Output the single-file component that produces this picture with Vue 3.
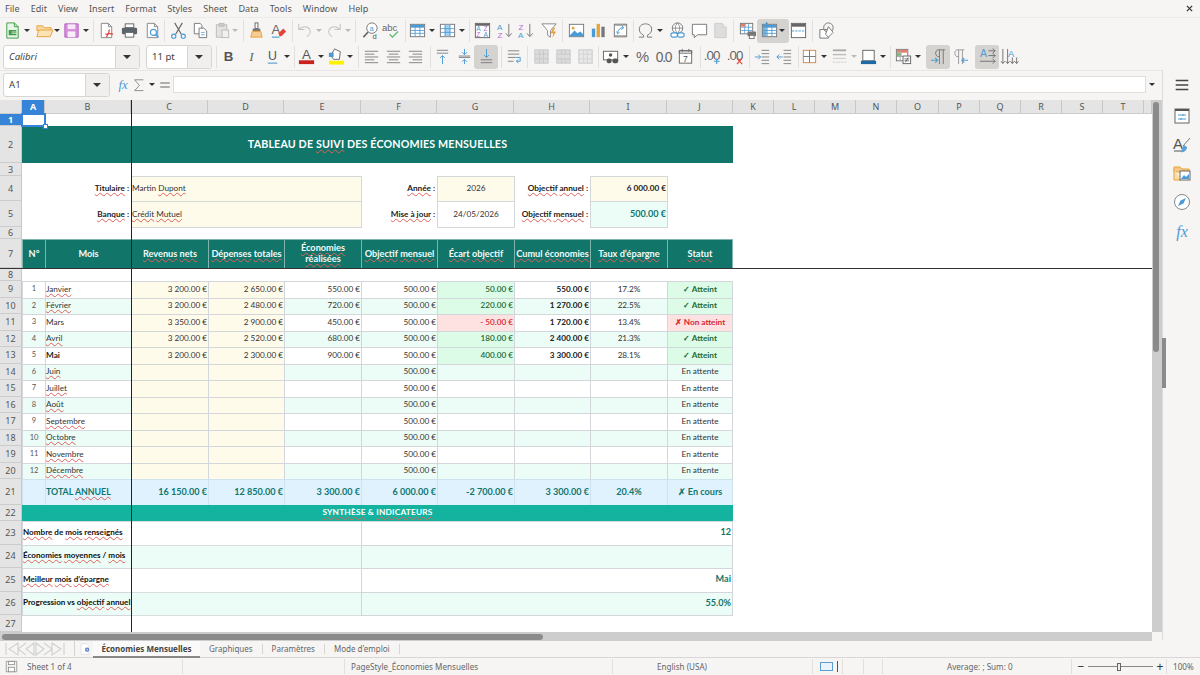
<script setup>
const menus = ['File','Edit','View','Insert','Format','Styles','Sheet','Data','Tools','Window','Help']

const B='#4a9bd6', G='#666', O='#e9a23b', L='#c4c4c4'
const page = (c='#777',f='#fff') => `<path d="M4.500 2.500h7.500l3.500 3.500v11.500h-11z" fill="${f}" stroke="${c}"/><path d="M12 2.500v3.500h3.500" fill="none" stroke="${c}"/>`
const lines = (ys,x1,x2,c=G) => ys.map(y=>`<path d="M${x1} ${y}H${x2}" stroke="${c}" stroke-width=".8"/>`).join('')
const lineAlt = (ys,x1,x2,x3,x4) => ys.map((y,i)=>`<path d="M${i%2?x3:x1} ${y}H${i%2?x4:x2}" stroke="${G}" stroke-width=".8"/>`).join('')
const gridI = (c=B,head=true) => `<rect x="2.500" y="3.500" width="15" height="13" fill="#fff" stroke="#777"/>${head?`<rect x="3" y="4" width="14" height="3" fill="${c}"/>`:''}<path d="M7.500 4v12M12.500 4v12M3 10h14M3 13h14" stroke="${c}" stroke-width=".9"/>`
const icons = {
  new:`<path d="M4 2h8l4 4v12H4z" fill="#e8f6e8" stroke="#3f9b48"/><path d="M12 2v4h4" fill="none" stroke="#3f9b48"/><rect x="6" y="9.500" width="8" height="5.500" fill="#3f9b48"/><path d="M9 11.500h5M9 13h5" stroke="#fff" stroke-width=".7"/>`,
  open:`<path d="M2 5h6l2 2h7v3H2z" fill="#f7d7a1" stroke="${O}"/><path d="M2 16.500l2-7h15l-3 7z" fill="#fbe3b8" stroke="${O}"/>`,
  save:`<path d="M3 3h14v14H3z" fill="#d88fdc" stroke="#b45cc0"/><rect x="6" y="3.500" width="8" height="5" fill="#f8e8f9"/><rect x="6" y="11" width="8" height="6" fill="#f8eff9"/>`,
  pdf:page('#888')+`<path d="M10 17c2-3 3-6 3-8M9 14c3-1 6-1 8 0" fill="none" stroke="#d9453c" stroke-width="1.300"/>`,
  print:`<rect x="5.500" y="3" width="9" height="4" fill="#fff" stroke="#666"/><rect x="2" y="7" width="16" height="7" rx="1.500" fill="#5b646b"/><rect x="5.500" y="12" width="9" height="5" fill="#fff" stroke="#666"/>`,
  preview:page('#888')+`<circle cx="11" cy="12" r="3.200" fill="#fff" stroke="${B}" stroke-width="1.200"/><path d="M13.300 14.300l3 3" stroke="${B}" stroke-width="1.500"/>`,
  cut:`<path d="M6 2l7 12M14 2L7 14" stroke="#666" stroke-width="1.200"/><circle cx="5" cy="16" r="2.200" fill="none" stroke="${B}" stroke-width="1.200"/><circle cx="15" cy="16" r="2.200" fill="none" stroke="${B}" stroke-width="1.200"/>`,
  copy:`<path d="M3.500 2.500h6l2 2v9h-8z" fill="#fff" stroke="#777"/><path d="M8.500 7.500h5l3 3v7h-8z" fill="#fff" stroke="#777"/><path d="M10.500 12h4M10.500 14.500h4" stroke="${B}" stroke-width=".8"/>`,
  paste:`<rect x="3.500" y="4" width="11" height="13" fill="#e2e2e2" stroke="#bbb"/><rect x="6.500" y="2.500" width="5" height="3" fill="#ccc" stroke="#bbb"/><rect x="9.500" y="9.500" width="7" height="8" fill="#f0f0f0" stroke="#bbb"/>`,
  clone:`<rect x="8.500" y="2" width="3" height="6" fill="#fff" stroke="#666"/><path d="M6 8h8v3H6z" fill="#777"/><path d="M5.500 11h9l1.500 6H4z" fill="#f7cc92" stroke="${O}"/>`,
  clear:`<text x="2.500" y="14" font-size="14" font-family="Liberation Sans" fill="#666">A</text><path d="M3 17h8" stroke="${B}" stroke-width="1.200"/><path d="M10 13l5-5 3 3-5 5h-2z" fill="#e4433b"/>`,
  undo:`<path d="M4 3v6h6M4.500 9c3-4 9-4 11 0 1.500 3-.5 6-3 7.500" fill="none" stroke="${L}" stroke-width="1.100"/>`,
  redo:`<path d="M16 3v6h-6M15.500 9c-3-4-9-4-11 0-1.500 3 .5 6 3 7.500" fill="none" stroke="${L}" stroke-width="1.100"/>`,
  find:`<circle cx="11.500" cy="7.500" r="5.500" fill="#fff" stroke="#777"/><path d="M7.500 11.500L2.500 17" stroke="#666" stroke-width="1.700"/><text x="9" y="10" font-size="8" font-family="Liberation Sans" fill="${B}">a</text><text x="12" y="18.500" font-size="8" font-family="Liberation Sans" fill="#555">d</text>`,
  spell:`<text x="0" y="10" font-size="10" font-family="Liberation Sans" fill="#666">abc</text><path d="M8 14l3 3 6-6" fill="none" stroke="#5dbb74" stroke-width="1.400"/>`,
  table:gridI(),
  col:`<rect x="2.500" y="3.500" width="15" height="13" fill="#fff" stroke="#777"/><rect x="7" y="4" width="6" height="12" fill="#a5d0f0"/><path d="M7.500 4v12M12.500 4v12M3 8h14M3 12h14" stroke="${B}" stroke-width=".9"/>`,
  sort:`<rect x="2.500" y="2.500" width="15" height="15" fill="#fff" stroke="#666"/><rect x="3" y="3" width="14" height="2" fill="#666"/><text x="3.500" y="11" font-size="7" font-family="Liberation Sans" fill="${B}">A</text><text x="11" y="11" font-size="7" font-family="Liberation Sans" fill="#b56ad3">Z</text><text x="3.500" y="17" font-size="7" font-family="Liberation Sans" fill="#b56ad3">Z</text><text x="11" y="17" font-size="7" font-family="Liberation Sans" fill="${B}">A</text>`,
  asc:`<text x="1" y="9" font-size="8.500" font-family="Liberation Sans" fill="${B}">A</text><text x="1.500" y="17.500" font-size="8.500" font-family="Liberation Sans" fill="#b56ad3">Z</text><path d="M13.500 3v13M10.500 13l3 3.500 3-3.500" fill="none" stroke="#777"/>`,
  desc:`<text x="1.500" y="9" font-size="8.500" font-family="Liberation Sans" fill="#b56ad3">Z</text><text x="1" y="17.500" font-size="8.500" font-family="Liberation Sans" fill="${B}">A</text><path d="M13.500 3v13M10.500 13l3 3.500 3-3.500" fill="none" stroke="#777"/>`,
  filter:`<path d="M2 3h15l-6 7v7l-3-2v-5z" fill="#fff" stroke="#888"/><path d="M14 7l-3 6h3l-1 5 4-7h-3l2-4z" fill="${O}"/>`,
  image:`<rect x="2.500" y="3.500" width="15" height="13" fill="#fff" stroke="#777"/><circle cx="6.500" cy="7.500" r="1.500" fill="${O}"/><path d="M3 15l5-5 3 3 3-2 3 3v2H3z" fill="${B}"/>`,
  chart:`<rect x="3" y="8" width="3.500" height="9" fill="${B}"/><rect x="8" y="3" width="3.500" height="14" fill="${O}"/><rect x="13" y="6" width="3.500" height="11" fill="#777"/>`,
  pivot:`<rect x="3.500" y="3.500" width="13" height="13" fill="#fff" stroke="#777"/><path d="M4 4h12M4 16h12" stroke="#999" stroke-width="2"/><path d="M7 13c0-3 2-6 6-6M11 5l2.500 2L11 9M6 11l1 2.500 2-1.500" fill="none" stroke="${B}"/>`,
  omega:`<path d="M3 17h5v-2c-3-1.500-4.500-3.500-4.500-6.500C3.500 5 6.500 3 10 3s6.500 2 6.500 5.500c0 3-1.500 5-4.500 6.500v2h5" fill="none" stroke="#777"/>`,
  link:`<circle cx="10" cy="7.500" r="5.500" fill="#fff" stroke="#777"/><path d="M4.500 7.500h11M10 2c-3 3-3 8 0 11M10 2c3 3 3 8 0 11" fill="none" stroke="#777" stroke-width=".8"/><rect x="3" y="12.500" width="7" height="4.500" rx="2.200" fill="#fff" stroke="${B}" stroke-width="1.200"/><rect x="10" y="12.500" width="7" height="4.500" rx="2.200" fill="#fff" stroke="${B}" stroke-width="1.200"/>`,
  comment:`<path d="M2.500 3.500h15v11H8l-3.500 3v-3h-2z" fill="#fff" stroke="#777"/>`,
  note:`<path d="M4 2.500h8l4 4v11H4z" fill="#ddd" stroke="#ccc"/><path d="M12 2.500v4h4" fill="#eee" stroke="#ccc"/>`,
  area:`<rect x="2.500" y="2.500" width="13" height="11" fill="#fff" stroke="#777"/><path d="M3 6.500h12M3 10h12M7 3v10M11 3v10" stroke="${B}" stroke-width=".8"/><rect x="3" y="3" width="5" height="3" fill="#e57f72"/><rect x="10" y="11" width="9" height="5" rx="1" fill="#777"/><rect x="12" y="15" width="5" height="3.500" fill="#fff" stroke="#777"/>`,
  freeze:gridI(B,true)+`<path d="M7 1.500v3M6 2.500l1-1 1 1" stroke="${B}"/><rect x="3" y="4" width="4" height="12" fill="#4a9bd6" opacity=".75"/>`,
  split:`<rect x="2.500" y="2.500" width="15" height="15" fill="#fff" stroke="#666"/><rect x="3" y="3" width="14" height="3" fill="#666"/><path d="M3 10.500h14" stroke="${B}" stroke-dasharray="2.500 1"/>`,
  shapes:`<path d="M3 9h9v9H3z" fill="#fff" stroke="#777"/><circle cx="12" cy="7" r="5" fill="none" stroke="#777"/><path d="M12 6l5 6-5 5-3-3z" fill="#fff" stroke="#777"/>`,
  bold:`<text x="10" y="15" text-anchor="middle" font-size="14" font-weight="700" font-family="Liberation Sans" fill="#555">B</text>`,
  ital:`<text x="10" y="15" text-anchor="middle" font-size="14" font-style="italic" font-family="Liberation Serif" fill="#666">I</text>`,
  under:`<text x="10" y="14" text-anchor="middle" font-size="13" font-family="Liberation Sans" fill="#555">U</text><path d="M5 17h10" stroke="#7aaed6" stroke-width="1.500"/>`,
  color:`<text x="10" y="13" text-anchor="middle" font-size="14" font-family="Liberation Sans" fill="#555">A</text><rect x="2" y="14" width="16" height="4" fill="#c9211e"/>`,
  hi:`<rect x="2" y="14.500" width="16" height="4" fill="#fff200"/><path d="M8 2l6 3-1 8H7L4 9z" fill="#fff" stroke="#666"/><rect x="2" y="6" width="5" height="4.500" fill="${B}"/>`,
  al:lineAlt([4.500,7.500,10.500,13.500,16.500],3,17,3,13),
  ac:lineAlt([4.500,7.500,10.500,13.500,16.500],3,17,5,15),
  ar:lineAlt([4.500,7.500,10.500,13.500,16.500],3,17,7,17),
  top:lines([3.500,6.500],4,16)+`<path d="M10 18V9M7.500 11.500L10 9l2.500 2.500" fill="none" stroke="${B}"/>`,
  mid:lines([9.500,11],4,16)+`<path d="M10 2v6M7.500 5.500L10 8l2.500-2.500M10 18v-5M7.500 15.500L10 13l2.500 2.500" fill="none" stroke="${B}"/>`,
  bot:lines([13.500,16.500],4,16)+`<path d="M10 2v9M7.500 8.500L10 11l2.500-2.500" fill="none" stroke="${B}"/>`,
  wrap:lines([4,7.500],3,15)+lines([11],3,11)+lines([15],3,9)+`<path d="M11 11h5v4h-4M14 13l-2 2 2 2" fill="none" stroke="${B}"/>`,
  merge:`<rect x="3" y="3" width="14" height="14" fill="#dcdcdc" stroke="#c8c8c8"/><path d="M3 7.500h14M3 12.500h14M8 3v14M12 3v14" stroke="#c8c8c8"/>`,
  merge2:`<rect x="3" y="3" width="14" height="14" fill="#dcdcdc" stroke="#c8c8c8"/><path d="M3 7.500h14M3 12.500h14M8 3v4M12 3v4M8 13v4M12 13v4" stroke="#c8c8c8"/>`,
  merge3:`<rect x="3" y="3" width="14" height="14" fill="#e8e8e8" stroke="#c8c8c8"/><path d="M3 7.500h14M3 12.500h14M8 3v14M12 3v14" stroke="#d4d4d4"/>`,
  money:`<rect x="1.500" y="4.500" width="15" height="9" fill="#fff" stroke="#666"/><circle cx="9" cy="8.500" r="1.800" fill="#555"/><rect x="5" y="12" width="5" height="5" rx="2" fill="#555"/><rect x="11" y="12" width="6" height="5" rx="2" fill="#555"/>`,
  pct:`<text x="10" y="16" text-anchor="middle" font-size="15.500" font-family="Liberation Sans" font-weight="400" fill="#666">%</text>`,
  num:`<text x="10" y="15.500" text-anchor="middle" font-size="14.500" font-family="Liberation Sans" letter-spacing="-1.200" fill="#666">0.0</text>`,
  date:`<rect x="3.500" y="4" width="13" height="13" fill="#fff" stroke="#666"/><path d="M3.500 4h13v2.500h-13zM6.500 2v3M13.500 2v3" fill="none" stroke="#666"/><text x="10" y="15.500" text-anchor="middle" font-size="9" font-family="Liberation Sans" fill="#555">7</text>`,
  addd:`<text x="9" y="14" text-anchor="middle" font-size="14" letter-spacing="-1" font-family="Liberation Sans" fill="#666">.00</text><path d="M14.500 12v6M11.500 15h6" stroke="${B}" stroke-width="1.200"/>`,
  deld:`<text x="9" y="14" text-anchor="middle" font-size="14" letter-spacing="-1" font-family="Liberation Sans" fill="#666">.00</text><path d="M11.500 12l5.500 6M17 12l-5.500 6" stroke="#e4433b" stroke-width="1.200"/>`,
  ind:lines([3.500,7,10.500,14,17.500],9,17)+`<path d="M2 10.500h6M5.500 8l2.500 2.500-2.500 2.500" fill="none" stroke="${B}"/>`,
  outd:lines([3.500,7,10.500,14,17.500],9,17)+`<path d="M8 10.500H2M4.500 8L2 10.500 4.500 13" fill="none" stroke="${B}"/>`,
  bord:`<rect x="3.500" y="3.500" width="13" height="13" fill="#fff" stroke="#c98a55"/><path d="M10 3.500v13M3.500 10h13" stroke="#777"/>`,
  bstyle:`<path d="M3 3.500h14" stroke="#aaa" stroke-width="2"/><path d="M3 8h14" stroke="#bbb" stroke-width="1.500"/><path d="M3 12h14" stroke="#c8c8c8"/><path d="M3 16h14" stroke="#c8c8c8" stroke-dasharray="2 1"/>`,
  bcolor:`<rect x="4" y="3.500" width="12" height="11" fill="#fff" stroke="#666"/><rect x="2" y="14.500" width="16" height="3.500" fill="#1e6aa5"/>`,
  cond:`<rect x="2.500" y="2.500" width="12" height="12" fill="#fff" stroke="#777"/><rect x="3" y="3" width="11" height="3" fill="#e57f72"/><rect x="3" y="6" width="5" height="4" fill="#7fbf7b"/><path d="M6.500 3v11M3 10h11" stroke="#aaa"/><rect x="9.500" y="9.500" width="8" height="8" fill="#fff" stroke="#666"/><path d="M11 12.500h5M11 14.500h5M12 16l3-5" stroke="#555" stroke-width=".8"/>`,
  ltr:`<path d="M11 3v15M15 3v15M17 3h-8a4 4 0 0 0 0 7h2" fill="none" stroke="#777"/><path d="M2 14h7M6.500 11.500L9 14l-2.500 2.500" fill="none" stroke="${B}" stroke-width="1.200"/>`,
  rtl:`<path d="M8 3v15M12 3v15M14 3H6a4 4 0 0 0 0 7h2" fill="none" stroke="#999"/><path d="M18 14h-6M14 11.500L11.500 14l2.500 2.500" fill="none" stroke="${B}" stroke-width="1.200"/>`,
  ltxt:`<text x="2" y="11" font-size="11" font-family="Liberation Sans" fill="${B}">A</text><path d="M11 4h7M15.500 1.500L18 4l-2.500 2.500M11 9h7M15.500 6.500L18 9l-2.500 2.500M2 15h16M15.500 12.500L18 15l-2.500 2.500" fill="none" stroke="#666" stroke-width=".9"/>`,
  ttb:`<text x="8.500" y="10" font-size="10" font-family="Liberation Sans" fill="${B}">A</text><path d="M3 2v15M1 15l2 2.500 2-2.500M8 2v15M6 15l2 2.500 2-2.500M13 11v6M11 15l2 2.500 2-2.500M17.500 11v6M15.500 15l2 2.500 2-2.500" fill="none" stroke="#666" stroke-width=".9"/>`,
  menu:`<path d="M3 5h14M3 10h14M3 15h14" stroke="#444" stroke-width="1.600"/>`,
  props:`<rect x="3" y="3" width="14" height="14" fill="#fff" stroke="#666"/><rect x="3" y="3" width="14" height="2" fill="#555"/><path d="M6 9h8M6 13h8M11 8v2M9 12v2" stroke="${B}"/>`,
  stylesI:`<text x="1" y="14" font-size="15" font-family="Liberation Sans" fill="#555">A</text><path d="M2 16h9" stroke="#555"/><path d="M18 3l-7 8" stroke="#777"/><path d="M12 10l3 2c0 3-3 6-6 5 1-2 1-5 3-7z" fill="#5aa0d8"/>`,
  gallery:`<path d="M2 4h6l2 2h7v3H2z" fill="#f7c884" stroke="${O}"/><path d="M2 6v11h7" fill="#fbdca6" stroke="${O}"/><rect x="8" y="8" width="10" height="9" fill="#fff" stroke="#666"/><path d="M9 16l3-4 2 2 3-3v5z" fill="${B}"/>`,
  nav:`<circle cx="10" cy="10" r="7.500" fill="#fff" stroke="#888"/><path d="M14 6l-2.500 5.500L6 14l2.500-5.500z" fill="${B}"/>`,
  fx:`<text x="10" y="15.500" text-anchor="middle" font-size="16" font-style="italic" font-family="Liberation Serif" fill="${B}">fx</text>`,
  sum:`<path d="M15.500 3.500h-11l6 7-6 6.500h11" fill="none" stroke="#777"/>`,
  eq:`<path d="M4 7.500h12M4 12.500h12" stroke="#666" stroke-width="1.500"/>`,
  addsheet:`<path d="M4.500 2.500h7.500l3.500 3.500v11.500h-11z" fill="#fff" stroke="#ddd"/><circle cx="13" cy="11" r="3" fill="#3f6fc0"/><path d="M13 9v4M11 11h4" stroke="#fff" stroke-width=".8"/>`,
  disk:`<path d="M3 3h14v14H3z" fill="#f2f2f2" stroke="#888"/><rect x="6" y="3.500" width="8" height="4" fill="#fff" stroke="#888"/><rect x="6" y="11" width="8" height="6" fill="#fff" stroke="#888"/>`,
}

// toolbar specs: [icon, centre x, option]; 'a' = dropdown arrow, 's' = separator
function flow(spec) {
  let end = 0
  return spec.map(([k, x, on], i) => {
    const w = k === 'a' || k === 'al2' ? 8 : k === 's' ? 1 : on ? 22 : 20
    const m = x - w / 2 - end
    end = x + w / 2
    return { k, w, i, on, style: { marginLeft: m + 'px', width: w + 'px' } }
  })
}
const row1 = flow([['new',12],['a',27],['open',44],['a',57],['save',71],['a',86],['s',93],['pdf',106],['print',129],['preview',152],['s',164],['cut',178],['copy',200],['paste',222],['al2',235],['s',243],['clone',256],['clear',278],['s',292],['undo',304],['al2',319],['redo',334],['al2',348],['s',355],['find',370],['spell',391],['s',405],['table',417],['a',432],['col',447],['a',462],['s',469],['sort',482],['asc',505],['desc',526],['filter',549],['s',562],['image',576],['chart',598],['pivot',620],['s',633],['omega',645],['a',660],['link',677],['comment',699],['note',720],['s',733],['area',747],['freeze',769,1],['a',782,2],['split',798],['s',812],['shapes',826]])
const row2 = flow([['s',216],['bold',228],['ital',251],['under',272],['a',287],['s',294],['color',306],['a',321],['hi',336],['a',350],['s',358],['al',371],['ac',393],['ar',415],['s',430],['top',442],['mid',464],['bot',486,1],['s',501],['wrap',514],['s',527],['merge',541],['merge2',563],['merge3',585],['s',598],['money',611],['a',626],['pct',642],['num',663],['date',685],['s',700],['addd',712],['deld',735],['s',749],['ind',762],['outd',784],['s',798],['bord',809],['a',824],['bstyle',839],['al2',854],['bcolor',868],['a',883],['s',890],['cond',903],['a',918],['s',927],['ltr',938,1],['rtl',960],['s',975],['ltxt',987,1],['ttb',1009]].map(([k,x,o]) => [k, x - 212, o]))

// ---- sheet ----
const colNames = ['A','B','C','D','E','F','G','H','I','J','K','L','M','N','O','P','Q','R','S','T','']
const colW = [23,86,77,76,77,76,77,76,77,66,41,41,41,41,42,41,41,41,41,41,8]
const rowH = [12,37,13,25,26,12,29,13,...Array(12).fill(16.5),26,16,23.5,23.5,23.5,23.5,17]
const gridStyle = {
  gridTemplateColumns: '22px ' + colW.map(w => w + 'px').join(' '),
  gridTemplateRows: '14px ' + rowH.map(h => h + 'px').join(' '),
}
const cells = []
// text: ~word~ marks the words carrying the red spell-check wave
function add(col, row, span, rspan, text, cls) {
  const segs = String(text ?? '').replace(/(\d) (\d)/g, '$1\u202f$2').split('~').map((t, i) => ({ t, sp: i % 2 === 1 }))
  const last = col + span === 11 ? ' last' : ''
  cells.push({ segs, cls: cls + last, id: col + '-' + row, style: { gridColumn: `${col + 1} / span ${span}`, gridRow: `${row + 1} / span ${rspan}` } })
}
add(1,2,10,1,'TABLEAU DE ~SUIVI~ DES ÉCONOMIES MENSUELLES','title')
add(1,4,2,1,'~Titulaire~ :','lab'); add(1,5,2,1,'~Banque~ :','lab')
add(3,4,3,1,'Martin ~Dupont~','box yel txt'); add(3,5,3,1,'~Crédit~ ~Mutuel~','box yel txt')
add(6,4,1,1,'~Année~ :','lab'); add(6,5,1,1,'~Mise à jour~ :','lab')
add(7,4,1,1,'2026','box yel ctr'); add(7,5,1,1,'24/05/2026','box ctr')
add(8,4,1,1,'~Objectif~ ~annuel~ :','lab'); add(8,5,1,1,'~Objectif~ ~mensuel~ :','lab')
add(9,4,1,1,'6 000.00 €','box yel num bold'); add(9,5,1,1,'500.00 €','box tea num tealtxt big')
;['N°','Mois','~Revenus~ ~nets~','~Dépenses~ ~totales~','~Économies~ ~réalisées~','~Objectif~ ~mensuel~','~Écart~ ~objectif~','~Cumul~ ~économies~','~Taux~ ~d’épargne~','~Statut~'].forEach((t,i)=>add(i+1,7,1,1,t,'head'))

const months = ['~Janvier~','~Février~','Mars','~Avril~','Mai','~Juin~','~Juillet~','~Août~','~Septembre~','~Octobre~','~Novembre~','~Décembre~']
const data = [
  ['3 200.00 €','2 650.00 €','550.00 €','50.00 €','550.00 €','17.2%',1],
  ['3 200.00 €','2 480.00 €','720.00 €','220.00 €','1 270.00 €','22.5%',1],
  ['3 350.00 €','2 900.00 €','450.00 €','- 50.00 €','1 720.00 €','13.4%',0],
  ['3 200.00 €','2 520.00 €','680.00 €','180.00 €','2 400.00 €','21.3%',1],
  ['3 200.00 €','2 300.00 €','900.00 €','400.00 €','3 300.00 €','28.1%',1],
]
months.forEach((m,i)=>{
  const r = 9+i, st = i%2 ? ' tea' : ' wht', d = data[i]
  add(1,r,1,1,i+1,'ctr tiny'+st)
  add(2,r,1,1,m,'txt'+st+(i===4?' bold':''))
  add(3,r,1,1,d?d[0]:'','num yel'); add(4,r,1,1,d?d[1]:'','num yel')
  add(5,r,1,1,d?d[2]:'','num'+st); add(6,r,1,1,'500.00 €','num'+st)
  if (d) {
    add(7,r,1,1,d[3],'num '+(d[6]?'ok':'bad'))
    add(8,r,1,1,d[4],'num bold'+st); add(9,r,1,1,d[5],'ctr'+st)
    add(10,r,1,1,d[6]?'✓ Atteint':'✗ Non atteint','ctr semi '+(d[6]?'ok':'bad'))
  } else {
    add(7,r,1,1,'','num'+st); add(8,r,1,1,'','num'+st); add(9,r,1,1,'','ctr'+st)
    add(10,r,1,1,'En attente','ctr'+st)
  }
})
add(1,21,1,1,'','tot'); add(2,21,1,1,'TOTAL ~ANNUEL~','tot txt big totlab')
;['16 150.00 €','12 850.00 €','3 300.00 €','6 000.00 €','-2 700.00 €','3 300.00 €'].forEach((t,i)=>add(3+i,21,1,1,t,'tot num big'))
add(9,21,1,1,'20.4%','tot ctr big'); add(10,21,1,1,'✗ En cours','tot ctr big')
add(1,22,10,1,'~SYNTHÈSE~ & ~INDICATEURS~','sect')
;[['~Nombre~ de ~mois~ ~renseignés~','12'],['~Économies~ ~moyennes~ / ~mois~',''],['~Meilleur~ ~mois~ ~d’épargne~','Mai'],['Progression vs ~objectif~ ~annuel~','55.0%']].forEach(([l,v],i)=>{
  const st = i%2 ? ' tea':' wht'
  add(1,23+i,2,1,l,'sum-l'+st); add(3,23+i,3,1,'','blank'+st); add(6,23+i,5,1,v,'sum-v'+st)
})
const rowNums = Array.from({length:27},(_,i)=>i+1)
const sheets = ['Graphiques','Paramètres','Mode d\'emploi']
</script>

<template>
  <div class="app">
    <header class="menubar">
      <span v-for="m in menus" :key="m">{{ m }}</span>
      <svg class="close" viewBox="0 0 8 8"><path d="M1 1l6 6M7 1L1 7" stroke="#333" stroke-width="1.400"/></svg>
    </header>

    <div class="bar bar1">
      <template v-for="it in row1" :key="it.i">
        <i v-if="it.k==='s'" class="sep" :style="it.style"></i>
        <i v-else-if="it.k==='a'" class="arrow" :style="it.style"></i>
        <i v-else-if="it.k==='al2'" class="arrow off" :style="it.style"></i>
        <span v-else class="ic" :class="{ on: it.on }" :style="it.style"><svg viewBox="0 0 20 20" v-html="icons[it.k]"></svg></span>
      </template>
    </div>

    <div class="bar bar2">
      <div class="combo font"><span>Calibri</span><b></b></div>
      <div class="combo size"><span>11 pt</span><b></b></div>
      <template v-for="it in row2" :key="it.i">
        <i v-if="it.k==='s'" class="sep" :style="it.style"></i>
        <i v-else-if="it.k==='a'" class="arrow" :style="it.style"></i>
        <i v-else-if="it.k==='al2'" class="arrow off" :style="it.style"></i>
        <span v-else class="ic" :class="{ on: it.on }" :style="it.style"><svg viewBox="0 0 20 20" v-html="icons[it.k]"></svg></span>
      </template>
    </div>

    <div class="middle">
      <div class="left">
        <div class="formula">
          <div class="combo name"><span>A1</span><b></b></div>
          <i class="sep fsep"></i>
          <span class="fi fi-fx"><svg viewBox="0 0 20 20" v-html="icons.fx"></svg></span>
          <span class="fi fi-sum"><svg viewBox="0 0 20 20" v-html="icons.sum"></svg></span>
          <i class="arrow fi-ar"></i>
          <span class="fi fi-eq"><svg viewBox="0 0 20 20" v-html="icons.eq"></svg></span>
          <div class="finput"></div>
          <i class="arrow fi-end"></i>
        </div>

        <div class="sheetwrap">
          <div class="sheet" :style="gridStyle">
            <div class="corner"></div>
            <div v-for="(c,i) in colNames" :key="'c'+i" class="colh" :class="{ sel: c==='A' }">{{ c }}</div>
            <div v-for="r in rowNums" :key="'r'+r" class="rowh" :class="{ sel: r===1 }">{{ r }}</div>
            <div v-for="c in cells" :key="c.id" class="cell" :class="c.cls" :style="c.style">
              <div class="inner"><template v-for="(s,si) in c.segs" :key="si"><span v-if="s.sp" class="sp">{{ s.t }}</span><template v-else>{{ s.t }}</template></template></div>
            </div>
            <div class="cursor"><i></i></div>
          </div>
          <i class="freeze-v"></i>
          <i class="freeze-h"></i>
          <div class="vscroll"><i></i></div>
        </div>

        <div class="hscroll"><i></i></div>
      </div>
      <aside class="side">
        <i class="grip"></i>
        <span class="si si1"><svg viewBox="0 0 20 20" v-html="icons.menu"></svg></span>
        <span class="si si2"><svg viewBox="0 0 20 20" v-html="icons.props"></svg></span>
        <span class="si"><svg viewBox="0 0 20 20" v-html="icons.stylesI"></svg></span>
        <span class="si"><svg viewBox="0 0 20 20" v-html="icons.gallery"></svg></span>
        <span class="si"><svg viewBox="0 0 20 20" v-html="icons.nav"></svg></span>
        <span class="si"><svg viewBox="0 0 20 20" v-html="icons.fx"></svg></span>
      </aside>
    </div>

    <div class="tabs">
      <span class="snav"><svg viewBox="0 0 62 16"><path d="M2 2v12M14 2L5 8l9 6zM22 2l-8 6 8 6M30 2l-8 6 8 6zM32 2l8 6-8 6zM40 2l8 6-8 6M48 2l9 6-9 6zM60 2v12" fill="none" stroke="#d2d2d2" stroke-width="1.200"/></svg></span>
      <i class="tsep t0"></i>
      <span class="addsheet"><svg viewBox="0 0 20 20" v-html="icons.addsheet"></svg></span>
      <span class="tab active">Économies Mensuelles</span>
      <template v-for="s in sheets" :key="s"><span class="tab">{{ s }}</span><i class="tsep"></i></template>
    </div>

    <footer class="status">
      <span class="st st-disk"><svg viewBox="0 0 20 20" v-html="icons.disk"></svg></span>
      <span class="st st-sheet">Sheet 1 of 4</span>
      <span class="st st-empty"></span>
      <span class="st st-page">PageStyle_Économies Mensuelles</span>
      <span class="st st-lang">English (USA)</span>
      <span class="st st-sel"><i class="selbox"></i><i class="ibeam"></i></span>
      <span class="st st-e1"></span><span class="st st-e2"></span>
      <span class="st st-sum">Average: ; Sum: 0</span>
      <span class="st st-zoom"><em>−</em><i class="slider"><u></u></i><em>+</em></span>
      <span class="st st-pct">100%</span>
    </footer>
  </div>
</template>

<style>
html, body { margin: 0; background: #f6f5f4; }
</style>

<style scoped>
.app { width: 1200px; height: 675px; overflow: hidden; background: #f6f5f4; font-family: "Noto Sans", sans-serif; color: #4a4a4a; display: flex; flex-direction: column; position: relative; }
.menubar { height: 17px; display: flex; align-items: center; padding-left: 5px; gap: 11.100px; font-size: 9.100px; box-sizing: border-box; color: #555; }
.close { margin-left: auto; margin-right: 7px; width: 7px; height: 7px; flex: none; }
.bar { display: flex; align-items: center; flex: none; }
.bar1 { height: 26px; border-top: 1px solid #ecebe9; box-sizing: border-box; }
.bar2 { height: 27px; }
.ic { display: flex; align-items: center; justify-content: center; height: 24px; flex: none; position: relative; }
.ic svg { width: 19px; height: 19px; flex: none; overflow: visible; }
.ic.on::before { content: ""; position: absolute; inset: 0 -1px; background: #d5d3d0; border-radius: 3px; }
.bar1 .ic.on::before { right: -9px; left: -1px; }
.ic.on svg { position: relative; }
.arrow { flex: none; height: 4px; position: relative; display: block; z-index: 1; }
.arrow::after { content: ""; position: absolute; left: 1px; top: 0; border: 3px solid transparent; border-top: 3.500px solid #333; border-bottom: 0; }
.arrow.off::after { border-top-color: #bbb; }
.sep { flex: none; height: 22px; background: #e2e0de; display: block; }
.combo { display: flex; height: 24px; box-sizing: border-box; border: 1px solid #d8d6d3; border-radius: 3px; background: #fff; font-size: 9.600px; align-items: center; color: #444; }
.combo span { flex: 1; padding-left: 5px; }
.combo b { width: 23px; height: 100%; background: #f1efed; border-left: 1px solid #d8d6d3; position: relative; border-radius: 0 3px 3px 0; }
.combo b::after { content: ""; position: absolute; left: 7px; top: 9px; border: 4px solid transparent; border-top: 4.500px solid #333; border-bottom: 0; }
.font { width: 137px; margin-left: 3px; font-style: italic; }
.size { width: 66px; margin-left: 6px; }
.middle { flex: 1; display: flex; min-height: 0; }
.left { width: 1162px; flex: none; display: flex; flex-direction: column; border-right: 1px solid #dddbd9; box-sizing: content-box; }
.formula { height: 30px; flex: none; display: flex; align-items: center; box-sizing: border-box; border-top: 1px solid #e8e6e4; padding-bottom: 2px; }
.name { width: 107px; margin-left: 3px; height: 24px; }
.fsep { margin-left: 3px; height: 20px; }
.fi { display: flex; width: 16px; height: 16px; flex: none; }
.fi svg { width: 16px; height: 16px; }
.fi-fx { margin-left: 2px; }
.fi-ar { width: 8px; margin-left: 1px; }
.fi-eq { margin-left: 1px; }
.finput { width: 973px; height: 17px; background: #fff; border: 1px solid #e0dedc; box-sizing: border-box; flex: none; }
.fi-end { width: 10px; margin-left: 2px; }
.sheetwrap { height: 532px; flex: none; position: relative; background: #fff; }
.sheet { display: grid; width: 1152px; height: 532px; overflow: hidden; background: #fff; font-family: Lato, "Open Sans", sans-serif; font-size: 8.200px; color: #333; }
.corner { grid-column: 1; grid-row: 1; background: #e4e4e4; border-right: 1px solid #ccc; border-bottom: 1px solid #ccc; }
.colh { grid-row: 1; background: #e4e4e4; border-right: 1px solid #c8c8c8; border-bottom: 1px solid #ccc; font: 9px/13px "Noto Sans", sans-serif; text-align: center; color: #555; box-sizing: border-box; }
.rowh { grid-column: 1; background: #e4e4e4; border-right: 1px solid #c8c8c8; border-bottom: 1px solid #ccc; font: 9px "Noto Sans", sans-serif; color: #555; display: flex; align-items: center; justify-content: center; box-sizing: border-box; }
.colh.sel, .rowh.sel { background: #3584d8; color: #fff; font-weight: 700; }
.cell { border: 1px solid #d3d7db; margin: 0 -1px -1px 0; display: flex; align-items: center; min-width: 0; overflow: visible; box-sizing: border-box; position: relative; padding-bottom: 2.500px; }
.cell.last { margin-right: 0; }
.cell.box, .cell.lab, .cell.tot, .cell.head, .cell.title { padding-bottom: 1.500px; }
.cell.sum-l, .cell.sum-v { padding-bottom: 3px; }
.inner { width: 100%; padding: 0 1px; box-sizing: border-box; white-space: nowrap; }
.sp { text-decoration: underline wavy #e0605a 0.6px; text-underline-offset: 0.5px; text-decoration-skip-ink: none; }
.wht { background: #fff; }
.tea { background: #ecfdf7; }
.yel { background: #fffbeb; }
.ok { background: #dcfce7; color: #1d6b3a; font-weight: 600; }
.bad { background: #fee2e2; color: #d92632; font-weight: 600; }
.semi { font-weight: 700; }
.num .inner { text-align: right; }
.ctr .inner { text-align: center; }
.txt .inner { text-align: left; padding-left: 0; }
.tiny { font-size: 7.500px; color: #555; }
.bold { font-weight: 700; color: #222; }
.big { font-size: 9.100px; font-weight: 700; }
.totlab { font-size: 8.800px; }
.tealtxt { color: #0f766e; }
.title { background: #11756a; border-color: #11756a; color: #fff; font-size: 10.700px; font-weight: 700; letter-spacing: .15px; margin-bottom: 0; }
.title .inner, .sect .inner, .head .inner { text-align: center; }
.lab { border-color: transparent; font-weight: 700; color: #222; }
.lab .inner { text-align: right; padding-right: 2px; }
.box { border-color: #d5d8d8; }
.head { background: #11756a; border-color: #7fb5ae; color: #f2fbf9; font-size: 9.200px; font-weight: 700; }
.head .inner { white-space: normal; line-height: 11px; padding: 0; }
.tot { background: #e0f2fe; color: #0f766e; border-color: #cfe3ef; font-weight: 700; }
.sect { background: #14b39f; border-color: #14b39f; color: #fff; font-weight: 700; font-size: 8.300px; letter-spacing: .2px; margin-bottom: 0; }
.sum-l { font-weight: 700; color: #111; font-size: 8.100px; }
.sum-l .inner { padding: 0; }
.sum-v { color: #0f766e; font-weight: 700; font-size: 9.100px; }
.sum-v .inner { text-align: right; }
.blank { border-color: #d9dde0; }
.cursor { grid-column: 2; grid-row: 2; border: 2px solid #3584d8; margin: -1px -1px -1px -1px; position: relative; z-index: 3; box-sizing: border-box; }
.cursor i { position: absolute; right: -4px; bottom: -4px; width: 3px; height: 3px; background: #fff; border: 1px solid #3584d8; }
.freeze-v { position: absolute; left: 131px; top: 0; bottom: 0; width: 1px; background: #222; z-index: 4; }
.freeze-h { position: absolute; left: 0; width: 1152px; top: 168px; height: 1px; background: #333; z-index: 4; }
.vscroll { position: absolute; left: 1152px; top: 0; bottom: 0; width: 10px; background: #cdcdcd; }
.vscroll i { display: block; margin: 2px 0 0 1px; width: 6px; height: 250px; background: #8b8b8b; border-radius: 3px; }
.hscroll { height: 9px; flex: none; background: linear-gradient(#cdcdcd,#cdcdcd) 0 0 / 1152px 9px no-repeat; padding-top: 1.500px; box-sizing: border-box; }
.hscroll i { display: block; width: 541px; height: 6px; margin-left: 2px; background: #8b8b8b; border-radius: 3px; }
.side { flex: 1; display: flex; flex-direction: column; align-items: center; position: relative; padding-top: 6px; gap: 8.800px; }
.si { display: flex; width: 20px; height: 20px; flex: none; }
.si svg { width: 100%; height: 100%; }
.si1 { width: 18px; height: 18px; margin-bottom: 3px; }
.grip { position: absolute; left: -1px; top: 268px; width: 4px; height: 50px; background: #8b8b8b; }
.tabs { height: 18px; flex: none; display: flex; align-items: center; font-size: 8px; color: #666; border-bottom: 1px solid #d9d7d5; box-sizing: border-box; }
.snav { display: flex; margin-left: 4px; width: 64px; flex: none; }
.snav svg { width: 62px; height: 16px; }
.tsep { width: 1px; height: 10px; background: #d6d4d2; flex: none; margin-left: 9px; }
.t0 { margin-left: 6px; height: 15px; }
.addsheet { display: flex; width: 14px; height: 16px; margin-left: 3px; }
.addsheet svg { width: 16px; height: 16px; }
.tab { flex: none; margin-left: 9px; }
.tab.active { margin-left: 1px; width: 107px; height: 17px; line-height: 16px; text-align: center; background: #fafafa; font-weight: 700; color: #444; border-bottom: 2px solid #888; box-sizing: border-box; margin-top: 1px; }
.status { height: 17px; flex: none; display: flex; align-items: center; font-size: 8.100px; color: #666; }
.st { height: 15px; display: flex; align-items: center; flex: none; box-sizing: border-box; border-right: 1px solid #e2e0de; white-space: nowrap; }
.st-disk { width: 27px; border: 0; padding-left: 4px; }
.st-disk svg { width: 15px; height: 15px; }
.st-sheet { width: 156px; }
.st-empty { width: 162px; }
.st-page { width: 268px; padding-left: 6px; }
.st-lang { width: 200px; padding-left: 44px; }
.st-sel { width: 30px; padding-left: 7px; }
.selbox { width: 11px; height: 7px; border: 1px solid #5a9fd0; background: #eaf3fa; display: block; }
.ibeam { width: 1px; height: 11px; background: #555; margin-left: 4px; display: block; }
.st-e1 { width: 21px; }
.st-e2 { width: 19px; }
.st-sum { width: 189px; padding-left: 64px; }
.st-zoom { width: 95px; padding-left: 5px; gap: 3px; }
.st-zoom em { font-style: normal; font-size: 12px; color: #333; width: 8px; text-align: center; }
.slider { width: 65px; height: 1px; background: #888; position: relative; display: block; }
.slider u { position: absolute; left: 29px; top: -3px; width: 2px; height: 6px; border: 1px solid #666; background: #eee; }
.st-pct { border: 0; padding-left: 6px; }
</style>
